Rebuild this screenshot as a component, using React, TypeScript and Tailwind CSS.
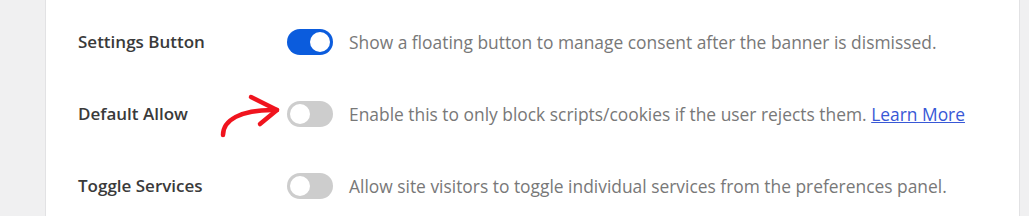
import React from 'react';

const Toggle: React.FC<{ on?: boolean }> = ({ on }) => (
  <span
    className={`flex h-[26px] w-[46px] shrink-0 items-center rounded-full px-[3px] ${
      on ? 'justify-end bg-[#0b5cdd]' : 'justify-start bg-[#cdcdcd]'
    }`}
  >
    <span className="h-[20px] w-[20px] rounded-full bg-white" />
  </span>
);

const Arrow = () => (
  <svg
    className="absolute left-[-68px] top-[-10px]"
    width="64"
    height="48"
    viewBox="0 0 64 48"
    fill="none"
    stroke="#f0141e"
    strokeWidth="4.5"
    strokeLinecap="round"
    strokeLinejoin="round"
  >
    {/* curved shaft + head */}
    <path d="M4 44 C 4 30, 20 18, 58 19" />
    <path d="M32 6 L58 19 L41 33" />
  </svg>
);

const rows = [
  {
    label: 'Settings Button',
    on: true,
    text: 'Show a floating button to manage consent after the banner is dismissed.',
  },
  {
    label: 'Default Allow',
    on: false,
    text: 'Enable this to only block scripts/cookies if the user rejects them.',
    link: true,
    arrow: true,
  },
  {
    label: 'Toggle Services',
    on: false,
    text: 'Allow site visitors to toggle individual services from the preferences panel.',
  },
];

export default function App() {
  return (
    <div
      className="flex h-[216px] w-[1029px] overflow-hidden bg-[#f0f0f1]"
      style={{ fontFamily: '"Open Sans", "Noto Sans", sans-serif' }}
    >
      <div className="w-[45px] shrink-0" />
      <div className="flex w-[975px] shrink-0 flex-col gap-[46px] border-x border-[#e2e2e4] bg-white pl-[32px] pt-[29px]">
        {rows.map(r => (
          <div key={r.label} className="flex h-[26px] items-center">
            <div className="w-[209px] shrink-0 text-[17px] font-semibold text-[#3a3a3a]">{r.label}</div>
            <div className="relative">
              {r.arrow && <Arrow />}
              <Toggle on={r.on} />
            </div>
            <p className="ml-[16px] whitespace-nowrap text-[17.4px] text-[#787878]">
              {r.text}
              {r.link && (
                <>
                  {' '}
                  <a href="#" className="text-[#3858d6] underline">Learn More</a>
                </>
              )}
            </p>
          </div>
        ))}
      </div>
    </div>
  );
}
